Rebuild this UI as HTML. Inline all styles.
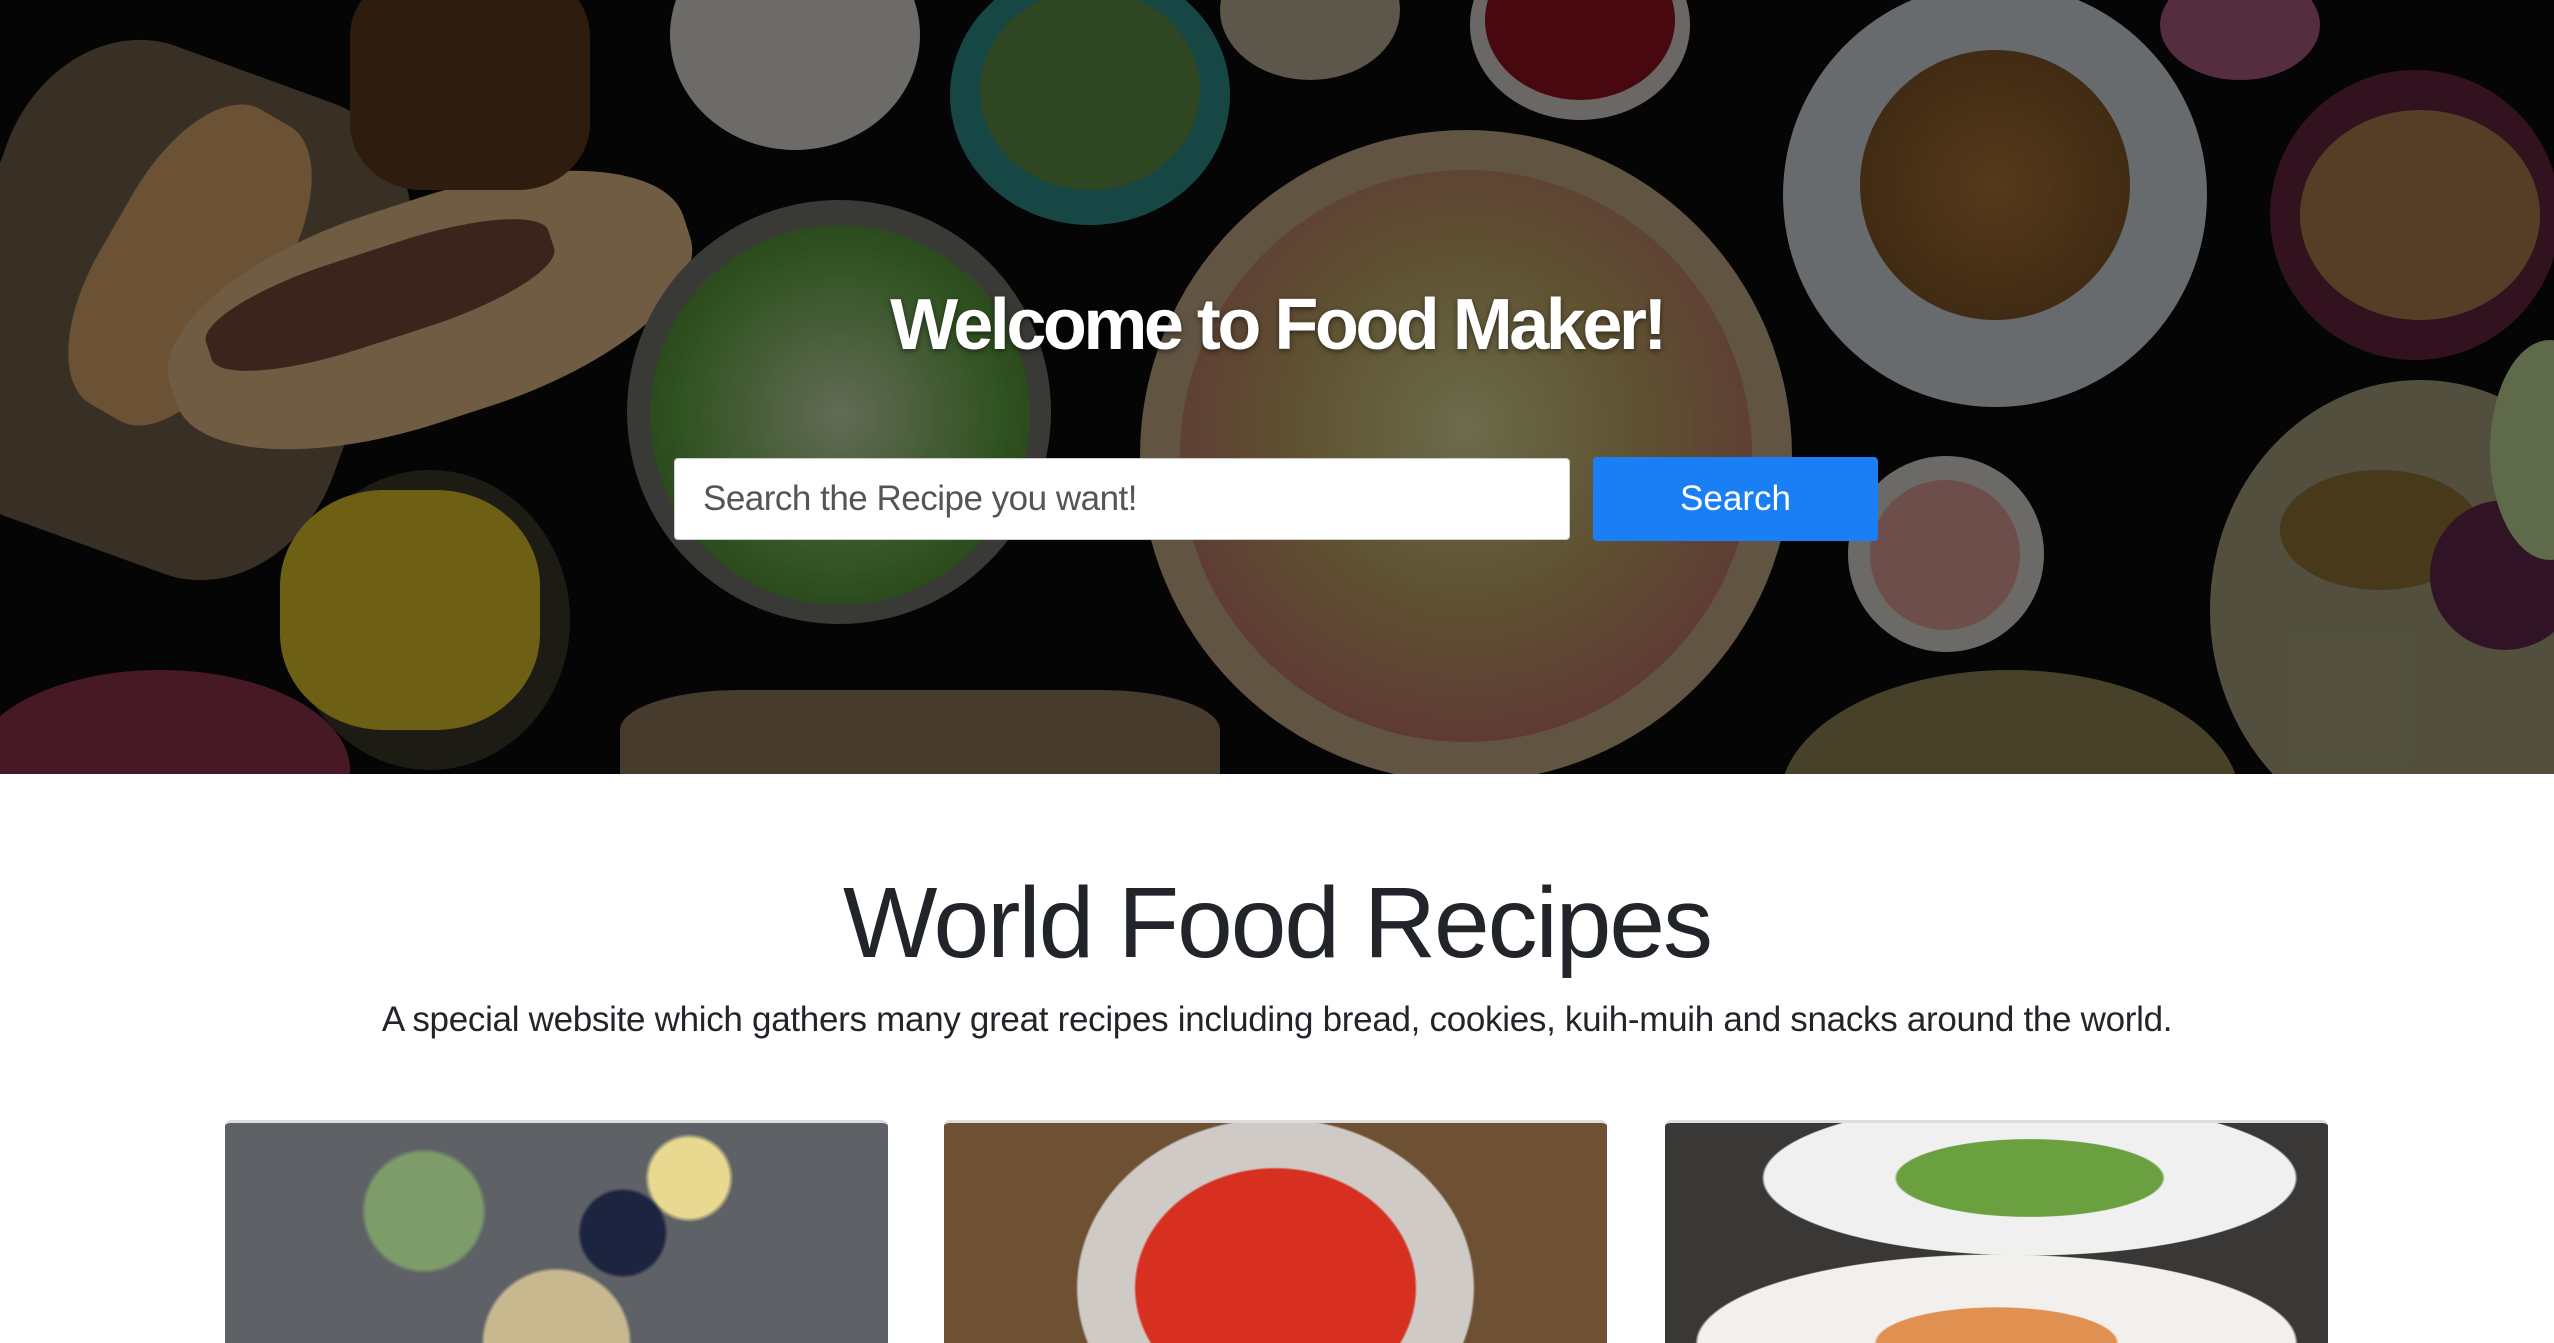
<!DOCTYPE html>
<html><head><meta charset="utf-8">
<style>
html,body{margin:0;padding:0;background:#fff;}
body{width:2554px;height:1330px;overflow:hidden;position:relative;font-family:"Liberation Sans",Arial,sans-serif;}
.hero{position:absolute;left:0;top:0;width:2554px;height:774px;background:#070707;overflow:hidden;}
.b{position:absolute;border-radius:50%;}
.h1{position:absolute;left:0;width:2554px;top:284px;text-align:center;color:#fff;font-weight:bold;font-size:72px;letter-spacing:-3.5px;text-shadow:0 2px 6px rgba(0,0,0,.5);}
.inp{position:absolute;left:674px;top:458px;width:896px;height:82px;background:#fff;border:1px solid #ccc;border-radius:4px;box-sizing:border-box;}
.inp span{position:absolute;left:28px;top:20px;font-size:35px;color:#555;letter-spacing:-0.5px;}
.btn{position:absolute;left:1593px;top:457px;width:285px;height:84px;background:#1a7ff5;border-radius:4px;color:#fff;font-size:35px;text-align:center;line-height:84px;}
h2{position:absolute;left:0;width:2554px;top:866px;margin:0;text-align:center;font-weight:normal;font-size:100px;letter-spacing:-2px;color:#212529;}
.sub{position:absolute;left:0;width:2554px;top:1000px;text-align:center;font-size:35px;letter-spacing:-0.3px;color:#212529;}
.card{position:absolute;top:1120px;width:663px;height:220px;border-radius:6px 6px 0 0;overflow:hidden;border-top:3px solid #ddd;}
</style></head><body>
<div class="hero">
  <div class="b" style="left:-40px;top:60px;width:420px;height:500px;background:#4a3e30;border-radius:30%;transform:rotate(20deg)"></div>
  <div class="b" style="left:20px;top:180px;width:340px;height:170px;background:#8a6a45;border-radius:40%;transform:rotate(-60deg)"></div>
  <div class="b" style="left:160px;top:200px;width:540px;height:220px;background:#8f7656;border-radius:45%;transform:rotate(-18deg)"></div>
  <div class="b" style="left:200px;top:250px;width:360px;height:90px;background:#4a3024;border-radius:40%;transform:rotate(-18deg)"></div>
  <div class="b" style="left:350px;top:-30px;width:240px;height:220px;background:#3c2612;border-radius:30%"></div>
  <div class="b" style="left:670px;top:-80px;width:250px;height:230px;background:#8c8a86"></div>
  <div class="b" style="left:950px;top:-35px;width:280px;height:260px;background:#1e5c58"></div>
  <div class="b" style="left:980px;top:-10px;width:220px;height:200px;background:#3c5a2c"></div>
  <div class="b" style="left:1220px;top:-60px;width:180px;height:140px;background:#77705f"></div>
  <div class="b" style="left:1470px;top:-70px;width:220px;height:190px;background:#8a8580"></div>
  <div class="b" style="left:1485px;top:-60px;width:190px;height:160px;background:#5c0c14"></div>
  <div class="b" style="left:627px;top:200px;width:424px;height:424px;background:#4a4a46"></div>
  <div class="b" style="left:650px;top:225px;width:380px;height:380px;background:radial-gradient(circle,#7f8a6e 0%,#3e6a2a 60%,#28461c 100%)"></div>
  <div class="b" style="left:1140px;top:130px;width:652px;height:652px;background:#7d6c55"></div>
  <div class="b" style="left:1180px;top:170px;width:572px;height:572px;background:radial-gradient(circle at 50% 45%,#8a8a60 0%,#7a6a40 40%,#7a4a44 75%,#7d7a75 100%)"></div>
  <div class="b" style="left:1783px;top:-17px;width:424px;height:424px;background:#86898c"></div>
  <div class="b" style="left:1860px;top:50px;width:270px;height:270px;background:radial-gradient(circle,#6e4a22 0%,#54381a 70%,#2c2a40 100%)"></div>
  <div class="b" style="left:2160px;top:-30px;width:160px;height:110px;background:#6c3a50"></div>
  <div class="b" style="left:2270px;top:70px;width:290px;height:290px;background:#42182a"></div>
  <div class="b" style="left:2300px;top:110px;width:240px;height:210px;background:#6c5030"></div>
  <div class="b" style="left:2210px;top:380px;width:420px;height:460px;background:#6a6650"></div>
  <div class="b" style="left:2280px;top:470px;width:200px;height:120px;background:#5c4a20"></div>
  <div class="b" style="left:2430px;top:500px;width:150px;height:150px;background:#3e1a30"></div>
  <div class="b" style="left:2490px;top:340px;width:120px;height:220px;background:#7a8860"></div>
  <div class="b" style="left:1848px;top:456px;width:196px;height:196px;background:#8a8884"></div>
  <div class="b" style="left:1870px;top:480px;width:150px;height:150px;background:#8c6460"></div>
  <div class="b" style="left:290px;top:470px;width:280px;height:300px;background:#26241a"></div>
  <div class="b" style="left:280px;top:490px;width:260px;height:240px;background:#8c7c1a;border-radius:40%"></div>
  <div class="b" style="left:-30px;top:670px;width:380px;height:200px;background:#5a2030"></div>
  <div class="b" style="left:620px;top:690px;width:600px;height:200px;background:#5c4c3c;border-radius:20%"></div>
  <div class="b" style="left:1780px;top:670px;width:460px;height:260px;background:#5a5434"></div>
  <div style="position:absolute;inset:0;background:rgba(0,0,0,.22)"></div>
  <div class="h1">Welcome to Food Maker!</div>
  <div class="inp"><span>Search the Recipe you want!</span></div>
  <div class="btn">Search</div>
</div>
<h2>World Food Recipes</h2>
<div class="sub">A special website which gathers many great recipes including bread, cookies, kuih-muih and snacks around the world.</div>
<div class="card" style="left:225px;background:radial-gradient(circle at 30% 40%,#7d9c6a 0 12%,transparent 13%),radial-gradient(circle at 60% 50%,#1c2440 0 10%,transparent 11%),radial-gradient(circle at 70% 25%,#e8d890 0 8%,transparent 9%),radial-gradient(circle at 50% 100%,#c8b890 0 18%,transparent 19%),#5e6266;"></div>
<div class="card" style="left:944px;background:radial-gradient(ellipse 35% 90% at 50% 75%,#d83020 0 60%,#cfcac5 61% 85%,transparent 86%),#6e5032;"></div>
<div class="card" style="left:1665px;background:radial-gradient(ellipse 40% 35% at 55% 25%,#6aa040 0 50%,#f0f0f0 51% 100%,transparent 101%),radial-gradient(ellipse 45% 40% at 50% 100%,#e09050 0 40%,#f2f0ec 41% 100%,transparent 101%),#3a3836;"></div>
</body></html>
